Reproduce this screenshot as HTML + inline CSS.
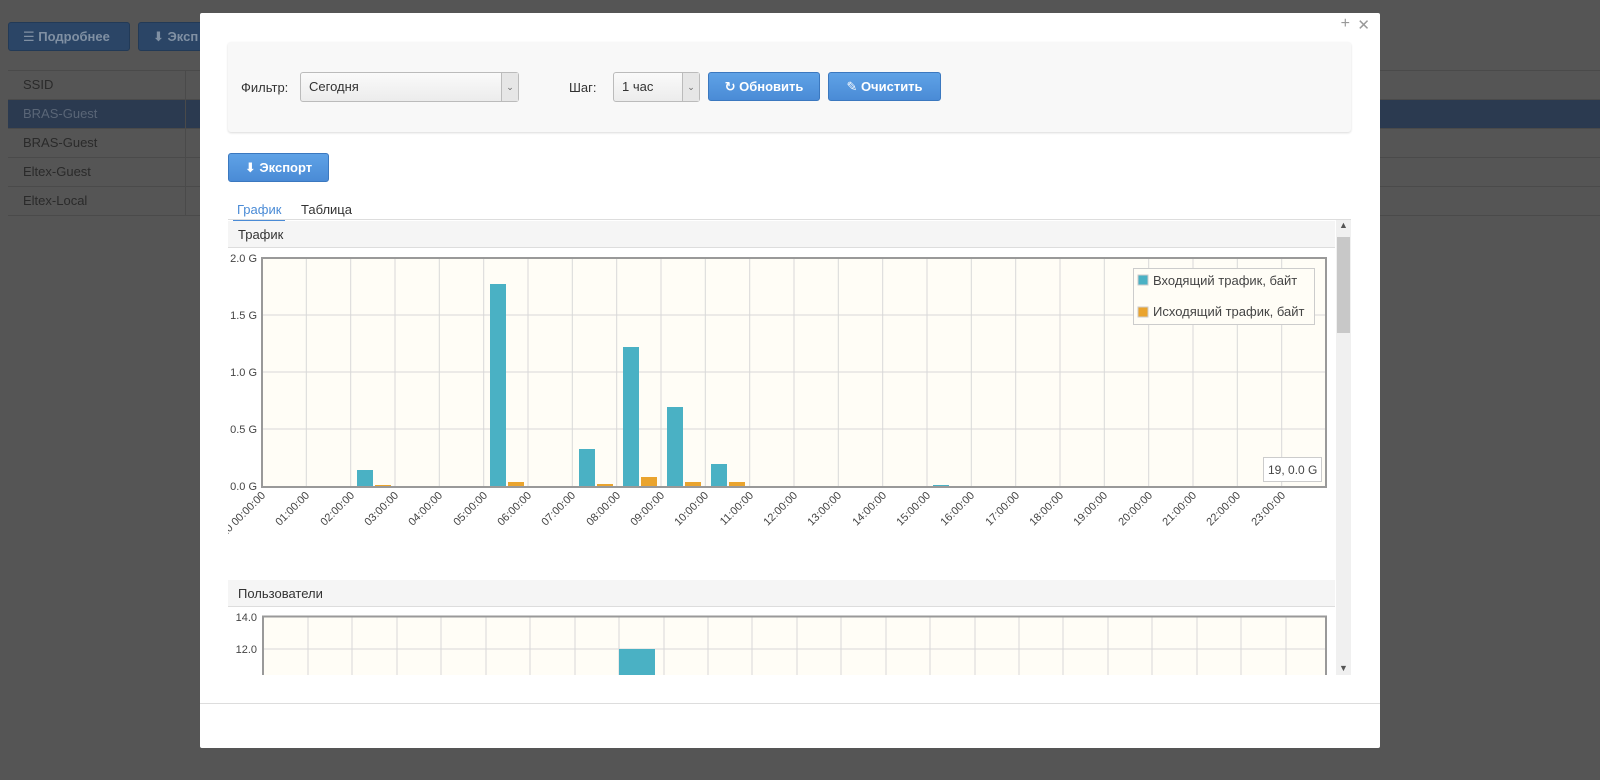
<!DOCTYPE html>
<html><head><meta charset="utf-8"><style>
*{box-sizing:border-box;margin:0;padding:0}
body{width:1600px;height:780px;overflow:hidden;background:#555;font-family:"Liberation Sans","DejaVu Sans",sans-serif;font-size:13px;color:#333;position:relative}
.bgbtn{position:absolute;top:22px;height:29px;background:#2b4566;border:1px solid #223a57;border-radius:3px;color:#8090a3;font-weight:bold;font-size:13px;line-height:27px;padding-left:14px}
.bgtable{position:absolute;left:8px;top:70px;width:1592px}
.bgrow{height:29px;border-bottom:1px solid #4a4a4a;color:#2a2a2a;padding-left:15px;line-height:28px;position:relative}
.bgrow:after{content:"";position:absolute;left:177px;top:0;bottom:0;border-left:1px solid #4a4a4a}
.modal{position:absolute;left:200px;top:13px;width:1180px;height:735px;background:#fff;border-radius:2px}
.panel{position:absolute;left:28px;top:29px;width:1123px;height:90px;background:#f8f8f8;border-radius:3px;box-shadow:0 1px 2px rgba(0,0,0,.15)}
.sel{position:absolute;height:30px;border:1px solid #bbb;border-radius:3px;background:linear-gradient(#fafafa,#ececec);line-height:28px;padding-left:8px;font-size:13px;color:#333}
.sel .ar{position:absolute;right:0;top:0;bottom:0;width:17px;border-left:1px solid #bbb;background:#e6e6e6;font-size:9px;text-align:center;color:#666}
.btn{position:absolute;height:29px;background:linear-gradient(#5fa2e6,#4a8bd6);border:1px solid #3b78bf;border-radius:3px;color:#fff;font-weight:bold;font-size:13px;line-height:27px;text-align:center}
.lbl{position:absolute;font-size:13px;color:#333}
</style></head><body>
<div class="bgbtn" style="left:8px;width:122px">☰ Подробнее</div>
<div class="bgbtn" style="left:138px;width:80px">⬇ Эксп</div>
<div class="bgtable">
<div class="bgrow" style="border-top:1px solid #4a4a4a;height:30px">SSID</div>
<div class="bgrow" style="background:#2b3a50;color:#5a6677">BRAS-Guest</div>
<div class="bgrow">BRAS-Guest</div>
<div class="bgrow">Eltex-Guest</div>
<div class="bgrow">Eltex-Local</div>
</div>
<div class="modal">
<div style="position:absolute;right:30px;top:2px;color:#999;font-size:16px">+</div>
<div style="position:absolute;right:10px;top:3px;color:#999;font-size:15px">✕</div>
<div class="panel">
<div class="lbl" style="left:13px;top:38px">Фильтр:</div>
<div class="sel" style="left:72px;top:30px;width:219px">Сегодня<div class="ar">⌄</div></div>
<div class="lbl" style="left:341px;top:38px">Шаг:</div>
<div class="sel" style="left:385px;top:30px;width:87px">1 час<div class="ar">⌄</div></div>
<div class="btn" style="left:480px;top:30px;width:112px">↻ Обновить</div>
<div class="btn" style="left:600px;top:30px;width:113px">✎ Очистить</div>
</div>
<div class="btn" style="left:28px;top:140px;width:101px">⬇ Экспорт</div>
<div style="position:absolute;left:37px;top:189px;color:#4a8bd6;font-size:13px">График</div>
<div style="position:absolute;left:33px;top:206px;width:52px;border-bottom:2px solid #4a8bd6"></div>
<div style="position:absolute;left:101px;top:189px;font-size:13px">Таблица</div>
<div style="position:absolute;left:28px;top:206px;width:1123px;border-top:1px solid #ddd"></div>
<div style="position:absolute;left:1136px;top:207px;width:15px;height:455px;background:#f0f0f0">
<div style="position:absolute;top:17px;left:1px;width:13px;height:96px;background:#c8c8c8"></div>
<div style="position:absolute;top:0;left:3px;font-size:9px;color:#555">▲</div>
<div style="position:absolute;bottom:2px;left:3px;font-size:9px;color:#555">▼</div>
</div>
<div style="position:absolute;left:0;top:690px;width:1180px;border-top:1px solid #ddd"></div>
</div>
<svg style="position:absolute;left:0;top:0" width="1600" height="780" font-family="Liberation Sans, DejaVu Sans, sans-serif">
<defs><clipPath id="cp"><rect x="228" y="200" width="1110" height="480"/></clipPath></defs>
<rect x="228" y="221" width="1107" height="26" fill="#f5f5f5"/>
<line x1="228" y1="247.5" x2="1335" y2="247.5" stroke="#ddd"/>
<text x="238" y="239" font-size="13" fill="#333">Трафик</text>
<rect x="262" y="258" width="1064" height="229" fill="#fffdf6"/>
<g stroke="#d8d8d8">
<line x1="262" y1="315" x2="1326" y2="315"/><line x1="262" y1="372" x2="1326" y2="372"/><line x1="262" y1="429" x2="1326" y2="429"/>
<line x1="306.3" y1="258" x2="306.3" y2="487"/><line x1="350.7" y1="258" x2="350.7" y2="487"/><line x1="395" y1="258" x2="395" y2="487"/><line x1="439.3" y1="258" x2="439.3" y2="487"/><line x1="483.7" y1="258" x2="483.7" y2="487"/><line x1="528" y1="258" x2="528" y2="487"/><line x1="572.3" y1="258" x2="572.3" y2="487"/><line x1="616.7" y1="258" x2="616.7" y2="487"/><line x1="661" y1="258" x2="661" y2="487"/><line x1="705.3" y1="258" x2="705.3" y2="487"/><line x1="749.7" y1="258" x2="749.7" y2="487"/><line x1="794" y1="258" x2="794" y2="487"/><line x1="838.3" y1="258" x2="838.3" y2="487"/><line x1="882.7" y1="258" x2="882.7" y2="487"/><line x1="927" y1="258" x2="927" y2="487"/><line x1="971.3" y1="258" x2="971.3" y2="487"/><line x1="1015.7" y1="258" x2="1015.7" y2="487"/><line x1="1060" y1="258" x2="1060" y2="487"/><line x1="1104.3" y1="258" x2="1104.3" y2="487"/><line x1="1148.7" y1="258" x2="1148.7" y2="487"/><line x1="1193" y1="258" x2="1193" y2="487"/><line x1="1237.3" y1="258" x2="1237.3" y2="487"/><line x1="1281.7" y1="258" x2="1281.7" y2="487"/>
</g>
<g fill="#4ab1c4">
<rect x="357" y="470" width="16" height="17"/><rect x="490" y="284" width="16" height="203"/><rect x="579" y="449" width="16" height="38"/><rect x="623" y="347" width="16" height="140"/><rect x="667" y="407" width="16" height="80"/><rect x="711" y="464" width="16" height="23"/><rect x="889" y="486" width="16" height="1"/><rect x="933" y="485" width="16" height="2"/>
</g>
<g fill="#eaa42e">
<rect x="375" y="485" width="16" height="2"/><rect x="508" y="482" width="16" height="5"/><rect x="597" y="484" width="16" height="3"/><rect x="641" y="477" width="16" height="10"/><rect x="685" y="482" width="16" height="5"/><rect x="729" y="482" width="16" height="5"/>
</g>
<rect x="262" y="258" width="1064" height="229" fill="none" stroke="#999" stroke-width="2"/>
<g font-size="11" fill="#444" text-anchor="end">
<text x="257" y="262">2.0 G</text><text x="257" y="319">1.5 G</text><text x="257" y="376">1.0 G</text><text x="257" y="433">0.5 G</text><text x="257" y="490">0.0 G</text>
</g>
<g font-size="11" fill="#444" text-anchor="end" clip-path="url(#cp)">
<text transform="translate(266,496) rotate(-45)">2020-10-20 00:00:00</text>
<text transform="translate(310,496) rotate(-45)">01:00:00</text><text transform="translate(355,496) rotate(-45)">02:00:00</text><text transform="translate(399,496) rotate(-45)">03:00:00</text><text transform="translate(443,496) rotate(-45)">04:00:00</text><text transform="translate(488,496) rotate(-45)">05:00:00</text><text transform="translate(532,496) rotate(-45)">06:00:00</text><text transform="translate(576,496) rotate(-45)">07:00:00</text><text transform="translate(621,496) rotate(-45)">08:00:00</text><text transform="translate(665,496) rotate(-45)">09:00:00</text><text transform="translate(709,496) rotate(-45)">10:00:00</text><text transform="translate(754,496) rotate(-45)">11:00:00</text><text transform="translate(798,496) rotate(-45)">12:00:00</text><text transform="translate(842,496) rotate(-45)">13:00:00</text><text transform="translate(887,496) rotate(-45)">14:00:00</text><text transform="translate(931,496) rotate(-45)">15:00:00</text><text transform="translate(975,496) rotate(-45)">16:00:00</text><text transform="translate(1020,496) rotate(-45)">17:00:00</text><text transform="translate(1064,496) rotate(-45)">18:00:00</text><text transform="translate(1108,496) rotate(-45)">19:00:00</text><text transform="translate(1153,496) rotate(-45)">20:00:00</text><text transform="translate(1197,496) rotate(-45)">21:00:00</text><text transform="translate(1241,496) rotate(-45)">22:00:00</text><text transform="translate(1286,496) rotate(-45)">23:00:00</text>
</g>
<rect x="1133.5" y="268.5" width="181" height="56" fill="#fffdf6" stroke="#ccc"/>
<rect x="1138" y="275" width="10" height="10" fill="#4ab1c4" stroke="#ccc"/>
<rect x="1138" y="307" width="10" height="10" fill="#eaa42e" stroke="#ccc"/>
<text x="1153" y="285" font-size="13" fill="#444">Входящий трафик, байт</text>
<text x="1153" y="316" font-size="13" fill="#444">Исходящий трафик, байт</text>
<rect x="1263.5" y="457.5" width="58" height="24" fill="#fff" stroke="#ccc"/>
<text x="1268" y="474" font-size="12" fill="#444">19, 0.0 G</text>
<rect x="228" y="580" width="1107" height="26" fill="#f5f5f5"/>
<line x1="228" y1="606.5" x2="1335" y2="606.5" stroke="#ddd"/>
<text x="238" y="598" font-size="13" fill="#333">Пользователи</text>
<rect x="263" y="616" width="1063" height="59" fill="#fffdf6"/>
<g stroke="#d8d8d8">
<line x1="263" y1="649" x2="1326" y2="649"/>
<line x1="308" y1="616" x2="308" y2="675"/><line x1="352" y1="616" x2="352" y2="675"/><line x1="397" y1="616" x2="397" y2="675"/><line x1="441" y1="616" x2="441" y2="675"/><line x1="486" y1="616" x2="486" y2="675"/><line x1="530" y1="616" x2="530" y2="675"/><line x1="575" y1="616" x2="575" y2="675"/><line x1="619" y1="616" x2="619" y2="675"/><line x1="664" y1="616" x2="664" y2="675"/><line x1="708" y1="616" x2="708" y2="675"/><line x1="752" y1="616" x2="752" y2="675"/><line x1="797" y1="616" x2="797" y2="675"/><line x1="841" y1="616" x2="841" y2="675"/><line x1="886" y1="616" x2="886" y2="675"/><line x1="930" y1="616" x2="930" y2="675"/><line x1="975" y1="616" x2="975" y2="675"/><line x1="1019" y1="616" x2="1019" y2="675"/><line x1="1063" y1="616" x2="1063" y2="675"/><line x1="1108" y1="616" x2="1108" y2="675"/><line x1="1152" y1="616" x2="1152" y2="675"/><line x1="1197" y1="616" x2="1197" y2="675"/><line x1="1241" y1="616" x2="1241" y2="675"/><line x1="1286" y1="616" x2="1286" y2="675"/>
</g>
<rect x="619" y="649" width="36" height="26" fill="#4ab1c4"/>
<path d="M263 675V616.5H1326V675" fill="none" stroke="#999" stroke-width="2"/>
<g font-size="11" fill="#444" text-anchor="end"><text x="257" y="621">14.0</text><text x="257" y="653">12.0</text></g>
</svg>
</body></html>
